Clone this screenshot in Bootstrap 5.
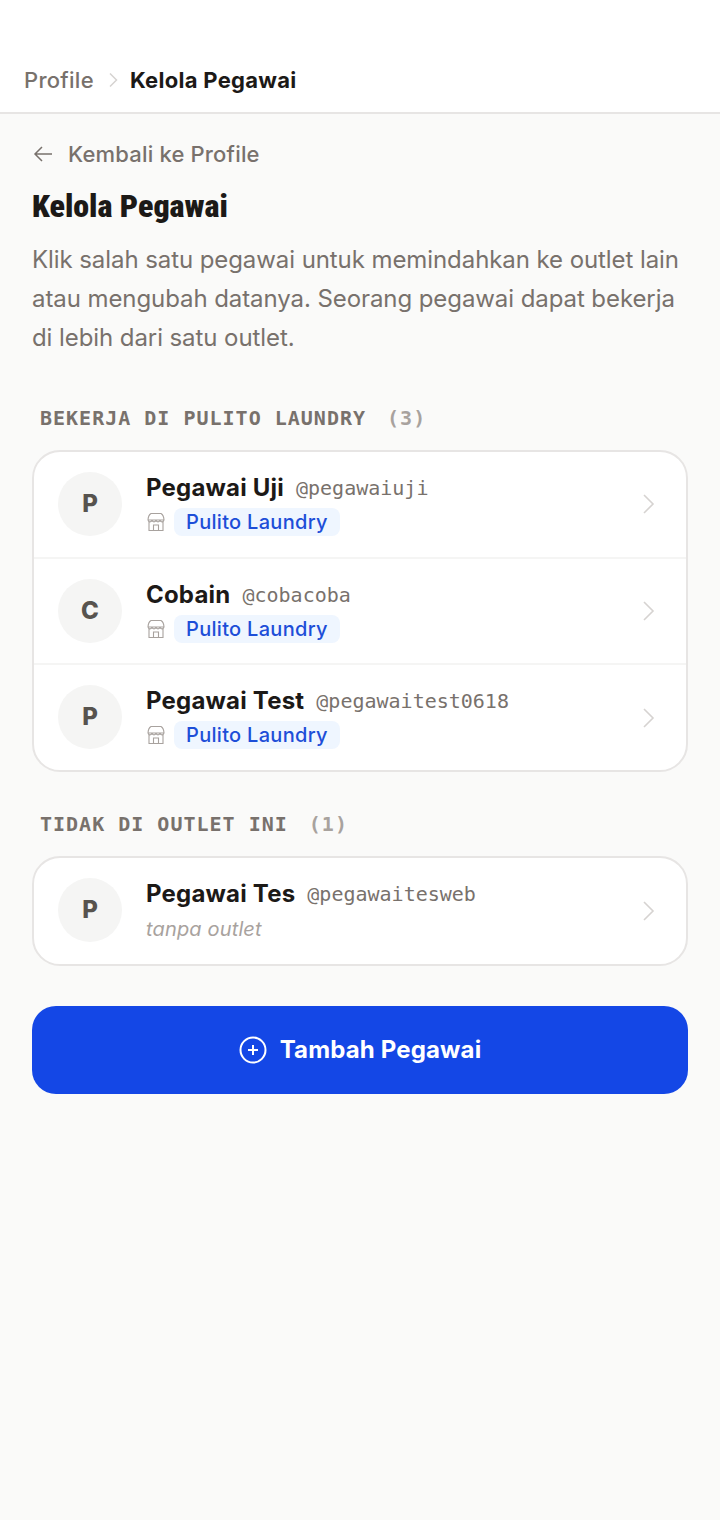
<!DOCTYPE html>
<html lang="id">
<head>
    <meta charset="UTF-8">
    <meta name="viewport" content="width=device-width, initial-scale=1.0">
    <title>Kelola Pegawai</title>
    <link rel="stylesheet" href="https://cdn.jsdelivr.net/npm/bootstrap@5.3.0/dist/css/bootstrap.min.css">
    <style>
        body {
            background-color: #fafaf9;
            font-family: Inter, sans-serif;
            color: #1c1917;
            min-height: 1520px;
        }
        .top-bar {
            height: 114px;
            padding: 0 24px 18px;
            background: #fff;
            border-bottom: 2px solid #e7e5e4;
            font-size: 22px;
            line-height: 28px;
            letter-spacing: .28px;
            gap: 12px;
        }
        .top-bar svg { margin-bottom: 7px; }
        .crumb-link { color: #78716c; font-weight: 500; }
        .crumb-now { font-weight: 700; }
        .page-wrap { padding: 26px 32px 0; }
        .back-link {
            color: #78716c;
            font-size: 22px;
            font-weight: 500;
            line-height: 28px;
            letter-spacing: .18px;
            gap: 14px;
            text-decoration: none;
        }
        .page-title {
            font-family: Roboto, sans-serif;
            font-stretch: 75%;
            font-weight: 900;
            font-size: 32px;
            line-height: 40px;
            margin: 18px 0 14px;
        }
        .page-desc {
            color: #78716c;
            font-size: 24px;
            line-height: 39px;
            letter-spacing: -.08px;
            margin-bottom: 47px;
        }
        .group-label {
            font-family: "DejaVu Sans Mono", monospace;
            font-weight: 700;
            font-size: 20px;
            line-height: 28px;
            letter-spacing: 1px;
            color: #78716c;
            padding-left: 8px;
            margin-bottom: 18px;
        }
        .group-count { color: #a8a29e; margin-left: 8px; }
        .staff-list {
            border: 2px solid #e7e5e4;
            border-radius: 28px;
            background: #fff;
            margin-bottom: 38px;
        }
        .staff-list.last-list { margin-bottom: 40px; }
        .staff-list .list-group-item {
            color: #1c1917;
            border-color: #f5f5f4;
            border-width: 0 0 2px;
            padding: 20px 31px 20px 24px;
            gap: 24px;
            background: transparent;
        }
        .staff-list .list-group-item:last-child { border-bottom: 0; }
        .staff-avatar {
            width: 64px;
            height: 64px;
            background: #f5f5f4;
            color: #57534e;
            font-size: 24px;
            font-weight: 800;
        }
        .staff-top { gap: 12px; }
        .staff-name { font-size: 24px; font-weight: 650; line-height: 32px; letter-spacing: .2px; }
        .staff-handle {
            font-family: "DejaVu Sans Mono", monospace;
            font-size: 20px;
            line-height: 32px;
            color: #78716c;
        }
        .staff-outlet { margin-top: 4px; margin-bottom: .67px; }
        .outlet-tag {
            background: #eff6ff;
            color: #1d4ed8;
            font-size: 20px;
            font-weight: 500;
            line-height: 28px;
            letter-spacing: .3px;
            padding: 0 12px;
            border-radius: 8px;
        }
        .no-outlet {
            color: #a8a29e;
            font-size: 20px;
            font-style: italic;
            line-height: 28px;
            letter-spacing: .15px;
            margin-top: 5px;
            margin-bottom: 1px;
        }
        .add-btn {
            height: 88px;
            background: #1447e6;
            border: 0;
            border-radius: 24px;
            font-size: 24px;
            font-weight: 700;
            letter-spacing: .15px;
            gap: 13px;
        }
        .add-btn:hover { background: #1240cf; }
    </style>
</head>
<body>

    <div class="top-bar d-flex align-items-end">
        <span class="crumb-link">Profile</span>
        <svg width="12" height="14" viewBox="0 0 12 14" fill="none" stroke="#d6d3d1" stroke-width="1.5"><path d="M4 .5l6.500 6.500L4 13.500"/></svg>
        <span class="crumb-now">Kelola Pegawai</span>
    </div>

    <div class="page-wrap">
        <a href="#" class="back-link d-flex align-items-center">
            <svg width="22" height="22" viewBox="0 0 22 22" fill="none" stroke="#78716c" stroke-width="1.5"><path d="M20 11H3M10 4l-7 7 7 7"/></svg>
            Kembali ke Profile
        </a>
        <h1 class="page-title">Kelola Pegawai</h1>
        <p class="page-desc">Klik salah satu pegawai untuk memindahkan ke outlet lain atau mengubah datanya. Seorang pegawai dapat bekerja di lebih dari satu outlet.</p>

        <div class="group-label">BEKERJA DI PULITO LAUNDRY <span class="group-count">(3)</span></div>
        <div class="list-group staff-list">
            <a href="#" class="list-group-item d-flex align-items-start">
                <div class="staff-avatar rounded-circle d-flex align-items-center justify-content-center flex-shrink-0">P</div>
                <div class="flex-grow-1">
                    <div class="staff-top d-flex align-items-center"><span class="staff-name">Pegawai Uji</span><span class="staff-handle">@pegawaiuji</span></div>
                    <div class="staff-outlet d-flex align-items-center gap-2">
                        <svg width="20" height="20" viewBox="0 0 20 20" fill="none" stroke="#a8a29e" stroke-width="1.1"><path d="M5 1.500h10c1.800 1 2.800 3 3 6.500-.3 2.500-3.700 2.500-4 0-.3 2.500-3.700 2.500-4 0-.3 2.500-3.700 2.500-4 0-.3 2.500-3.700 2.500-4 0 .2-3.500 1.200-5.500 3-6.500zM2 8h16M3 10v8.500h14V10M7.500 18.500V13h5v5.500"/></svg>
                        <span class="outlet-tag">Pulito Laundry</span>
                    </div>
                </div>
                <svg class="align-self-center" width="14" height="22" viewBox="0 0 14 22" fill="none" stroke="#d6d3d1" stroke-width="1.6"><path d="M3 2l9 9-9 9"/></svg>
            </a>
            <a href="#" class="list-group-item d-flex align-items-start">
                <div class="staff-avatar rounded-circle d-flex align-items-center justify-content-center flex-shrink-0">C</div>
                <div class="flex-grow-1">
                    <div class="staff-top d-flex align-items-center"><span class="staff-name">Cobain</span><span class="staff-handle">@cobacoba</span></div>
                    <div class="staff-outlet d-flex align-items-center gap-2">
                        <svg width="20" height="20" viewBox="0 0 20 20" fill="none" stroke="#a8a29e" stroke-width="1.1"><path d="M5 1.500h10c1.800 1 2.800 3 3 6.500-.3 2.500-3.700 2.500-4 0-.3 2.500-3.700 2.500-4 0-.3 2.500-3.700 2.500-4 0-.3 2.500-3.700 2.500-4 0 .2-3.500 1.200-5.500 3-6.500zM2 8h16M3 10v8.500h14V10M7.500 18.500V13h5v5.500"/></svg>
                        <span class="outlet-tag">Pulito Laundry</span>
                    </div>
                </div>
                <svg class="align-self-center" width="14" height="22" viewBox="0 0 14 22" fill="none" stroke="#d6d3d1" stroke-width="1.6"><path d="M3 2l9 9-9 9"/></svg>
            </a>
            <a href="#" class="list-group-item d-flex align-items-start">
                <div class="staff-avatar rounded-circle d-flex align-items-center justify-content-center flex-shrink-0">P</div>
                <div class="flex-grow-1">
                    <div class="staff-top d-flex align-items-center"><span class="staff-name">Pegawai Test</span><span class="staff-handle">@pegawaitest0618</span></div>
                    <div class="staff-outlet d-flex align-items-center gap-2">
                        <svg width="20" height="20" viewBox="0 0 20 20" fill="none" stroke="#a8a29e" stroke-width="1.1"><path d="M5 1.500h10c1.800 1 2.800 3 3 6.500-.3 2.500-3.700 2.500-4 0-.3 2.500-3.700 2.500-4 0-.3 2.500-3.700 2.500-4 0-.3 2.500-3.700 2.500-4 0 .2-3.500 1.200-5.500 3-6.500zM2 8h16M3 10v8.500h14V10M7.500 18.500V13h5v5.500"/></svg>
                        <span class="outlet-tag">Pulito Laundry</span>
                    </div>
                </div>
                <svg class="align-self-center" width="14" height="22" viewBox="0 0 14 22" fill="none" stroke="#d6d3d1" stroke-width="1.6"><path d="M3 2l9 9-9 9"/></svg>
            </a>
        </div>

        <div class="group-label">TIDAK DI OUTLET INI <span class="group-count">(1)</span></div>
        <div class="list-group staff-list last-list">
            <a href="#" class="list-group-item d-flex align-items-start">
                <div class="staff-avatar rounded-circle d-flex align-items-center justify-content-center flex-shrink-0">P</div>
                <div class="flex-grow-1">
                    <div class="staff-top d-flex align-items-center"><span class="staff-name">Pegawai Tes</span><span class="staff-handle">@pegawaitesweb</span></div>
                    <div class="no-outlet">tanpa outlet</div>
                </div>
                <svg class="align-self-center" width="14" height="22" viewBox="0 0 14 22" fill="none" stroke="#d6d3d1" stroke-width="1.6"><path d="M3 2l9 9-9 9"/></svg>
            </a>
        </div>

        <button type="button" class="btn btn-primary add-btn w-100 d-flex align-items-center justify-content-center">
            <svg width="28" height="28" viewBox="0 0 28 28" fill="none" stroke="#fff" stroke-width="2"><circle cx="14" cy="14" r="12.500"/><path d="M14 9v10M9 14h10"/></svg>
            Tambah Pegawai
        </button>
    </div>

    <script src="https://cdn.jsdelivr.net/npm/bootstrap@5.3.0/dist/js/bootstrap.bundle.min.js"></script>
</body>
</html>
